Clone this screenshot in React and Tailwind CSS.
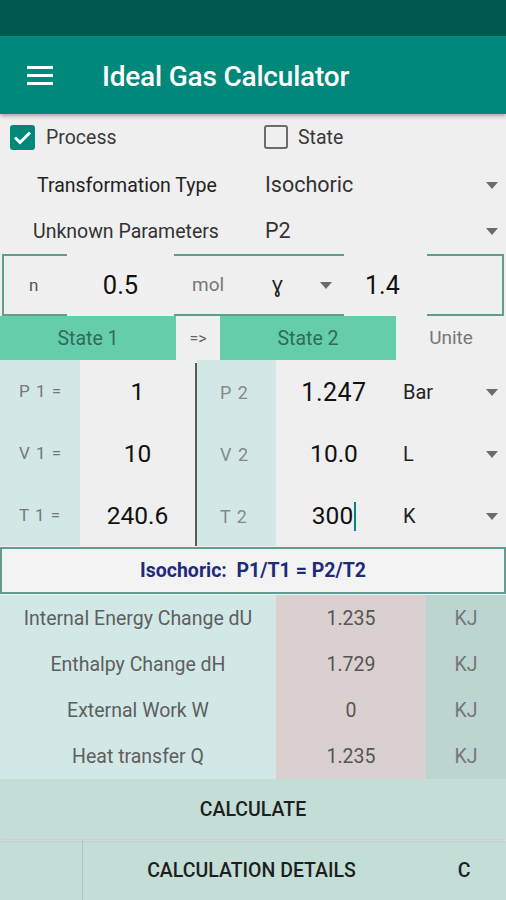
import React from "react";

const Tri = ({ className = "" }) => (
  <svg width="12" height="7" viewBox="0 0 12 7" className={className}>
    <path d="M0 0 L12 0 L6 7 Z" fill="#6b6b6b" />
  </svg>
);

export default function App() {
  return (
    <div className="w-[506px] h-[900px] overflow-hidden bg-[#efefef] flex flex-col" style={{ fontFamily: "Roboto, 'Noto Sans', sans-serif" }}>
      {/* status bar */}
      <div className="h-[36px] bg-[#00594f] shrink-0" />
      {/* toolbar */}
      <div className="h-[78px] bg-[#00897b] shrink-0 flex items-center shadow-[0_2px_4px_rgba(0,0,0,0.3)] relative z-10">
        <div className="ml-[27px] w-[26px] flex flex-col gap-[5px]">
          <div className="h-[3px] bg-white" />
          <div className="h-[3px] bg-white" />
          <div className="h-[3px] bg-white" />
        </div>
        <div className="ml-[49px] pt-[3px] text-white text-[28px] font-medium tracking-[-0.2px]">Ideal Gas Calculator</div>
      </div>

      {/* checkboxes */}
      <div className="h-[46px] flex items-center shrink-0">
        <div className="w-[264px] flex items-center pl-[10px]">
          <div className="w-[25px] h-[25px] rounded-[3px] bg-[#00897b] flex items-center justify-center">
            <svg width="19" height="15" viewBox="0 0 19 15"><path d="M2 7.5 L7 12.5 L17 2.5" stroke="white" strokeWidth="3" fill="none" /></svg>
          </div>
          <div className="ml-[11px] pt-[2px] text-[19.5px] text-[#3a3a3a]">Process</div>
        </div>
        <div className="w-[24px] h-[24px] rounded-[3px] border-[2px] border-[#6b6b6b]" />
        <div className="ml-[10px] pt-[2px] text-[19.5px] text-[#3a3a3a]">State</div>
      </div>

      {/* dropdown rows */}
      <div className="h-[46px] flex items-center shrink-0 mt-[2px] pt-[1px]">
        <div className="w-[265px] pl-[37px] text-[19.5px] text-[#222]">Transformation Type</div>
        <div className="flex-1 text-[21.5px] text-[#333]">Isochoric</div>
        <Tri className="mr-[8px]" />
      </div>
      <div className="h-[46px] flex items-center shrink-0 pt-[1px]">
        <div className="w-[265px] pl-[33px] text-[19.5px] text-[#333]">Unknown Parameters</div>
        <div className="flex-1 text-[21.5px] text-[#333]">P2</div>
        <Tri className="mr-[8px]" />
      </div>

      {/* n row */}
      <div className="h-[62px] shrink-0 flex items-stretch mx-[2px] border-[2px] border-[#5f9d90]">
        <div className="w-[63px] flex items-center pl-[25px] pt-[1px] text-[17px] text-[#555]">n</div>
        <div className="w-[107px] -my-[2px] bg-[#f0f0f0] flex items-center justify-center pt-[1px] text-[25.5px] text-[#111]">0.5</div>
        <div className="w-[85px] flex items-center pl-[18px] pt-[1px] text-[19px] text-[#777]">mol</div>
        <div className="w-[85px] flex items-center pl-[13px] pt-[1px] text-[21px] text-[#222]">
          <span>ɣ</span>
          <Tri className="ml-[37px]" />
        </div>
        <div className="w-[83px] -my-[2px] bg-[#f0f0f0] flex items-center pl-[21px] pt-[1px] text-[25px] text-[#111]">1.4</div>
        <div className="flex-1" />
      </div>

      {/* state tabs */}
      <div className="h-[44px] shrink-0 flex items-stretch">
        <div className="w-[176px] bg-[#66cdaa] flex items-center justify-center pt-[1px] text-[19.5px] text-[#2f6b5d]">State 1</div>
        <div className="w-[44px] flex items-center justify-center pt-[1px] text-[16px] text-[#666]">=&gt;</div>
        <div className="w-[176px] bg-[#66cdaa] flex items-center justify-center pt-[1px] text-[19.5px] text-[#2f6b5d]">State 2</div>
        <div className="flex-1 flex items-center justify-center pt-[1px] text-[19px] text-[#777]">Unite</div>
      </div>

      {/* state grid */}
      <div className="h-[186px] shrink-0 flex">
        <div className="w-[80px] bg-[#d2e8e6] flex flex-col">
          {["P 1 =", "V 1 =", "T 1 ="].map((t) => (
            <div key={t} className="flex-1 flex items-center pl-[19px] pt-[2px] text-[17px] text-[#777] tracking-[1px]">{t}</div>
          ))}
        </div>
        <div className="w-[115px] flex flex-col">
          {["1", "10", "240.6"].map((t) => (
            <div key={t} className="flex-1 flex items-center justify-center pt-[3px] text-[24.5px] text-[#111]">{t}</div>
          ))}
        </div>
        <div className="w-[2px] bg-[#5a5a5a] mt-[3px]" />
        <div className="w-[79px] bg-[#d2e8e6] flex flex-col">
          {["P 2", "V 2", "T 2"].map((t) => (
            <div key={t} className="flex-1 flex items-center pl-[23px] pt-[2px] text-[18px] text-[#888] tracking-[1px]">{t}</div>
          ))}
        </div>
        <div className="w-[116px] flex flex-col">
          <div className="flex-1 flex items-center justify-center pt-[3px] text-[25px] text-[#111] tracking-[0.5px]">1.247</div>
          <div className="flex-1 flex items-center justify-center pt-[3px] text-[24.5px] text-[#111]">10.0</div>
          <div className="flex-1 flex items-center justify-center pt-[3px] text-[24.5px] text-[#111]">
            <span>300</span><span className="w-[2px] h-[29px] bg-[#00897b] ml-[1px]" />
          </div>
        </div>
        <div className="flex-1 flex flex-col">
          {["Bar", "L", "K"].map((t) => (
            <div key={t} className="flex-1 flex items-center pl-[11px] pr-[8px] pt-[2px] text-[20px] text-[#222]">
              <span className="flex-1">{t}</span>
              <Tri />
            </div>
          ))}
        </div>
      </div>

      {/* formula */}
      <div className="h-[47px] shrink-0 border-[2px] border-[#5f9d90] bg-[#f3f3f3] flex items-center justify-center mt-[1px]">
        <span className="text-[19.5px] font-bold text-[#1f2a7a] whitespace-pre">Isochoric:  P1/T1 = P2/T2</span>
      </div>

      {/* results */}
      <div className="h-[184px] shrink-0 flex mt-[1px]">
        <div className="w-[276px] bg-[#d2e8e6] flex flex-col">
          {["Internal Energy Change dU", "Enthalpy Change dH", "External Work W", "Heat transfer Q"].map((t) => (
            <div key={t} className="flex-1 flex items-center justify-center pt-[1px] text-[19.5px] text-[#5e5e5e]">{t}</div>
          ))}
        </div>
        <div className="w-[150px] bg-[#dbd0d0] flex flex-col">
          {["1.235", "1.729", "0", "1.235"].map((t, i) => (
            <div key={i} className="flex-1 flex items-center justify-center pt-[1px] text-[19.5px] text-[#555]">{t}</div>
          ))}
        </div>
        <div className="flex-1 bg-[#bdd5d1] flex flex-col">
          {[0, 1, 2, 3].map((i) => (
            <div key={i} className="flex-1 flex items-center justify-center pt-[1px] text-[19.5px] text-[#777]">KJ</div>
          ))}
        </div>
      </div>

      {/* calculate */}
      <div className="h-[60px] shrink-0 bg-[#c2ded6] flex items-center justify-center pt-[2px] text-[19.5px] font-medium text-[#1e1e1e] shadow-[0_2px_2px_rgba(0,0,0,0.15)] relative z-10">
        CALCULATE
      </div>
      <div className="flex-1 mt-[2px] bg-[#c2ded6] flex items-stretch">
        <div className="w-[83px] border-r border-[#aac8c0]" />
        <div className="flex-1 flex items-center justify-center pt-[1px] text-[19.5px] font-medium text-[#1e1e1e] pr-[6px]">CALCULATION DETAILS</div>
        <div className="w-[80px] flex items-center justify-center pt-[1px] pr-[4px] text-[19.5px] font-medium text-[#1e1e1e]">C</div>
      </div>
    </div>
  );
}
